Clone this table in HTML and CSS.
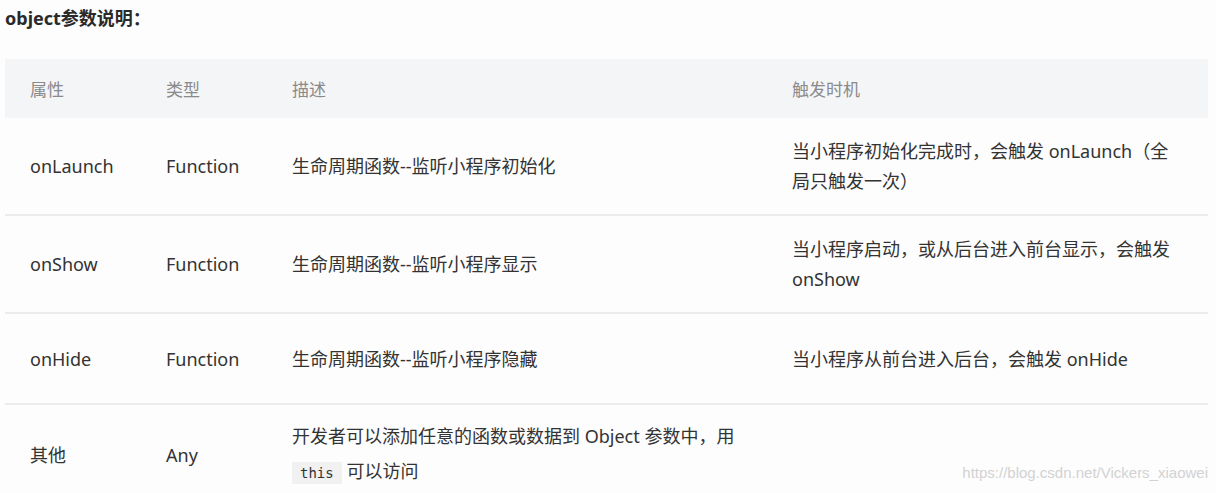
FILE: index.html
```html
<!DOCTYPE html>
<html lang="zh-CN">
<head>
<meta charset="utf-8">
<title>object参数说明</title>
<link rel="stylesheet" href="styles.css">
</head>
<body>
<div class="page">
  <h3 class="title">object参数说明：</h3>
  <div class="table">
    <div class="row head">
      <div class="cell">属性</div>
      <div class="cell">类型</div>
      <div class="cell">描述</div>
      <div class="cell">触发时机</div>
    </div>
    <div class="row">
      <div class="cell">onLaunch</div>
      <div class="cell">Function</div>
      <div class="cell">生命周期函数--监听小程序初始化</div>
      <div class="cell">当小程序初始化完成时，会触发 onLaunch（全局只触发一次）</div>
    </div>
    <div class="row">
      <div class="cell">onShow</div>
      <div class="cell">Function</div>
      <div class="cell">生命周期函数--监听小程序显示</div>
      <div class="cell">当小程序启动，或从后台进入前台显示，会触发 onShow</div>
    </div>
    <div class="row">
      <div class="cell">onHide</div>
      <div class="cell">Function</div>
      <div class="cell">生命周期函数--监听小程序隐藏</div>
      <div class="cell">当小程序从前台进入后台，会触发 onHide</div>
    </div>
    <div class="row last">
      <div class="cell">其他</div>
      <div class="cell">Any</div>
      <div class="cell loose">开发者可以添加任意的函数或数据到 Object 参数中，用 <code class="code">this</code> 可以访问</div>
      <div class="cell"></div>
    </div>
  </div>
  <div class="watermark">https://blog.csdn.net/Vickers_xiaowei</div>
</div>
</body>
</html>
```

FILE: styles.css
```css
html, body {
  margin: 0;
  padding: 0;
  background: #fdfdfd;
}

.page {
  position: relative;
  height: 493px;
  overflow: hidden;
  font-family: "Noto Sans", "Noto Sans CJK SC", sans-serif;
  color: #333;
}

.title {
  margin: 0 0 27px 0;
  padding: 4px 0 0 5px;
  font-size: 18px;
  line-height: 28px;
  font-weight: bold;
  color: #2a2a2a;
}

.table {
  margin-left: 5px;
  width: 1203px;
}

.row {
  display: grid;
  grid-template-columns: 136px 126px 500px 441px;
  align-items: center;
  box-sizing: border-box;
  min-height: 91px;
  padding: 18px 0;
  border-bottom: 2px solid #ececec;
  font-size: 18px;
  line-height: 30px;
}

.row.head {
  min-height: 0;
  height: 59px;
  padding: 3px 0 0;
  border-bottom: none;
  background: #f4f5f7;
  color: #8a8a8a;
  font-size: 17px;
}

.row.last {
  padding-top: 14px;
  border-bottom: none;
}

.cell {
  padding: 0 25px;
}

.cell.loose {
  line-height: 35px;
}

.code {
  font-family: "DejaVu Sans Mono", "Liberation Mono", monospace;
  font-size: 14px;
  background: #f1f1f1;
  color: #333;
  padding: 3px 8px;
}

.watermark {
  position: absolute;
  right: 8px;
  bottom: 12px;
  font-family: "Liberation Sans", Arial, sans-serif;
  font-size: 15px;
  color: #d2d2d2;
}
```
